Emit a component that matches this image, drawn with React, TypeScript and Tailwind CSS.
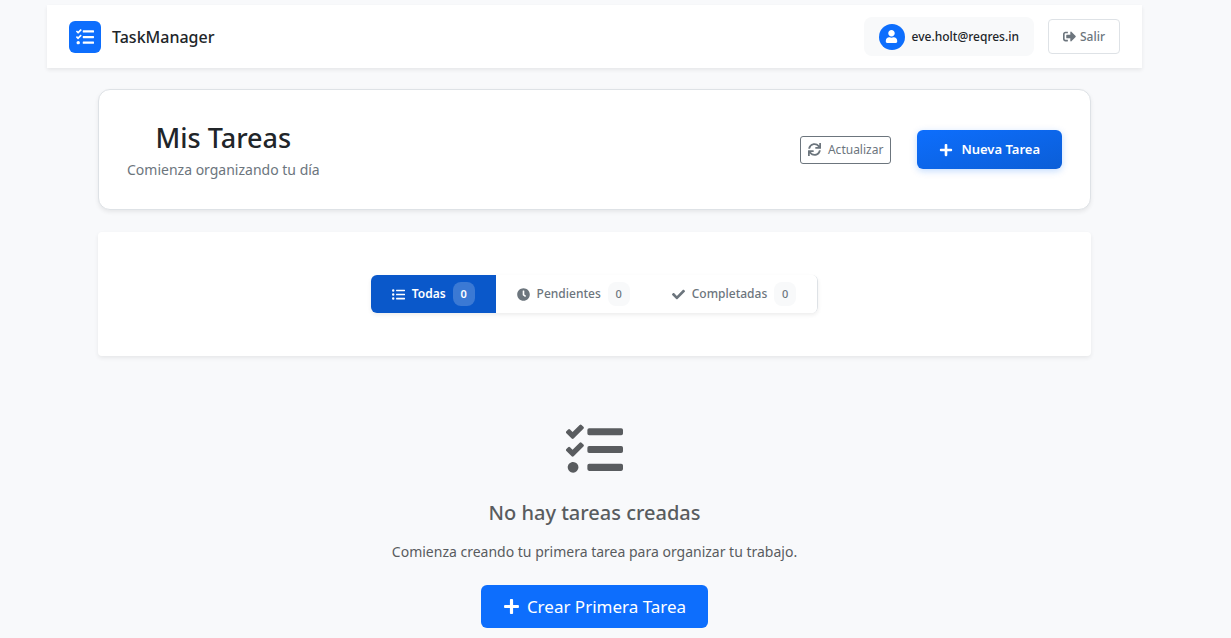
import { useState } from "react";
import { FaTasks, FaUser, FaSignOutAlt, FaSync, FaPlus, FaListUl, FaClock, FaCheck } from "react-icons/fa";

const filters = [
  { id: "all", label: "Todas", count: 0, Icon: FaListUl },
  { id: "pending", label: "Pendientes", count: 0, Icon: FaClock },
  { id: "done", label: "Completadas", count: 0, Icon: FaCheck },
];

function Navbar() {
  return (
    <header className="flex items-center justify-between bg-white px-[22px] pt-3 pb-3 shadow-[0_2px_4px_rgba(0,0,0,0.075)]">
      <a href="#" className="flex items-center gap-[11px] text-base leading-8 font-medium text-[#212529]">
        <span className="flex size-8 items-center justify-center rounded-md bg-[#0d6efd] text-white">
          <FaTasks size={18} />
        </span>
        TaskManager
      </a>
      <div className="flex items-center gap-[14px]">
        <div className="flex h-[39px] items-center gap-[7px] rounded-lg bg-[#f8f9fa] px-[15px] text-xs font-medium text-[#212529]">
          <span className="flex size-[26px] items-center justify-center rounded-full bg-[#0d6efd] text-white">
            <FaUser size={13} />
          </span>
          eve.holt@reqres.in
        </div>
        <button className="flex h-[35px] items-center gap-1 rounded border border-[#dee2e6] px-[14px] text-xs font-medium text-[#6c757d]">
          <FaSignOutAlt size={13} />
          Salir
        </button>
      </div>
    </header>
  );
}

function TaskHeader() {
  return (
    <section className="flex items-center justify-between rounded-xl border border-[#dee2e6] bg-white px-7 pt-7 pb-7 shadow-[0_2px_4px_rgba(0,0,0,0.075)]">
      <div className="text-center">
        <h1 className="text-[27px] leading-10 font-medium text-[#212529]">Mis Tareas</h1>
        <p className="text-sm leading-[23px] text-[#6c757d]">Comienza organizando tu día</p>
      </div>
      <div className="flex items-center gap-[26px]">
        <button className="flex h-7 items-center gap-[7px] rounded-[3px] border border-[#6c757d] px-[7px] text-xs text-[#6c757d]">
          <FaSync size={13} />
          Actualizar
        </button>
        <button className="flex h-[39px] items-center gap-2 rounded-md bg-linear-to-br from-[#0d6efd] to-[#0b5ed7] px-[22px] text-[13px] font-semibold text-white shadow-[0_2px_7px_rgba(13,110,253,0.25)]">
          <FaPlus size={14} />
          Nueva Tarea
        </button>
      </div>
    </section>
  );
}

function TaskFilters() {
  const [active, setActive] = useState("all");
  return (
    <section className="mt-[22px] flex justify-center rounded bg-white px-7 py-[43px] shadow-[0_2px_4px_rgba(0,0,0,0.075)]">
      <div className="flex overflow-hidden rounded-md border-r border-[#dee2e6] shadow-[0_2px_4px_rgba(0,0,0,0.075)]">
        {filters.map(({ id, label, count, Icon }) => (
          <button
            key={id}
            onClick={() => setActive(id)}
            className={
              active === id
                ? "flex h-[38px] items-center gap-[7px] bg-[#0a58ca] px-[21px] text-xs font-semibold text-white"
                : "flex h-[38px] items-center gap-[7px] bg-white px-[21px] text-xs font-medium text-[#6c757d]"
            }
          >
            <Icon size={13} />
            {label}
            <span
              className={
                active === id
                  ? "flex h-6 w-[22px] items-center justify-center rounded-lg bg-white/20 text-[11px]"
                  : "flex h-6 w-[22px] items-center justify-center rounded-lg bg-[#f8f9fa] text-[11px]"
              }
            >
              {count}
            </span>
          </button>
        ))}
      </div>
    </section>
  );
}

function EmptyState() {
  return (
    <section className="flex flex-col items-center pt-[65px] pb-[10px] text-center text-[#595c5f]">
      <FaTasks size={57} />
      <h2 className="mt-[19px] text-xl leading-8 font-medium">No hay tareas creadas</h2>
      <p className="mt-3 text-sm leading-[22px]">Comienza creando tu primera tarea para organizar tu trabajo.</p>
      <button className="mt-[22px] flex h-[43px] items-center gap-[7px] rounded-md bg-[#0d6efd] px-[22px] text-[17px] text-white">
        <FaPlus size={17} />
        Crear Primera Tarea
      </button>
    </section>
  );
}

export default function App() {
  return (
    <div className="min-h-screen bg-[#f8f9fb] pt-[5px] pr-[89px] pl-[47px] font-['Noto_Sans','Open_Sans',sans-serif]">
      <Navbar />
      <main className="mt-[21px] px-[51px]">
        <TaskHeader />
        <TaskFilters />
        <EmptyState />
      </main>
    </div>
  );
}
